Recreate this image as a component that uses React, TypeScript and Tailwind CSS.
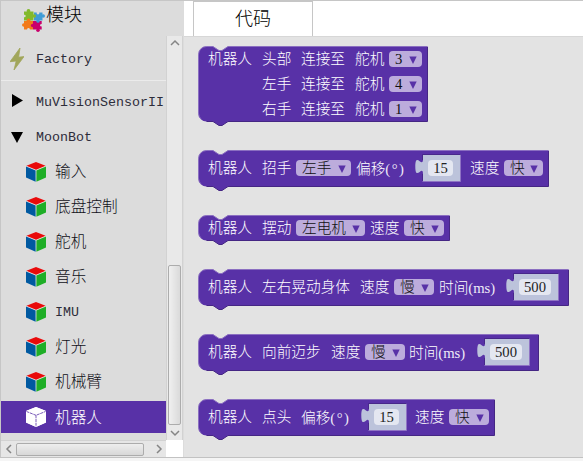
import React from 'react';

const PURPLE = '#5831a7';
const MONO = '"Liberation Mono", "Noto Sans CJK SC", monospace';

type Item =
  | { t: 'text'; s: string; w: string; unit?: string }
  | { t: 'drop'; s: string; w: string; m: string }
  | { t: 'num'; s: string; w: number; iw: string; m: string };

const text = (s: string, w: string, unit?: string): Item => ({ t: 'text', s, w, unit });
const drop = (s: string, w: string, m: string): Item => ({ t: 'drop', s, w, m });
const num = (s: string, w: number, iw: string, m: string): Item => ({ t: 'num', s, w, iw, m });

function Dropdown({ s, w, m }: { s: string; w: string; m: string }) {
  return (
    <div className={`flex h-4 shrink-0 items-center justify-between rounded-[4px] bg-[#bcacdc] pl-[6px] pr-[5px] font-['Liberation_Serif','Noto_Sans_CJK_SC',serif] text-[#111] ${w} ${m}`}>
      <span className="leading-4">{s}</span>
      <svg width="8" height="8" viewBox="0 0 8 8" className="mt-[2px]">
        <path d="M0.3 0.5H7.7L4 8Z" fill={PURPLE} />
      </svg>
    </div>
  );
}

function NumberValue({ s, w, iw, m }: { s: string; w: number; iw: string; m: string }) {
  return (
    <div className={`relative flex h-7 shrink-0 items-center pl-[13px] ${m}`} style={{ width: w }}>
      <svg className="absolute inset-0" width={w} height="28">
        <path
          d={`M${w - 0.5} .5H8V5C8 15 .3 -3 .3 12.5S8 10 8 20V27.5H${w - 0.5}Z`}
          fill="#bcc3db"
        />
        <path d={`M7.5 6V.5H${w - 0.5}`} fill="none" stroke="#47278a" />
        <path d="M7.5 20V27" fill="none" stroke="#47278a" />
        <path d={`M${w - 0.5} 1V27.5H7.5`} fill="none" stroke="#8f73c4" />
      </svg>
      <span className={`relative flex h-4 items-center justify-center rounded-[4px] bg-[#e4e7f1] font-['Liberation_Serif',serif] leading-4 text-[#222] ${iw}`}>
        {s}
      </span>
    </div>
  );
}

function Row({ items, h }: { items: Item[]; h: string }) {
  return (
    <div className={`relative flex items-center whitespace-nowrap ${h}`}>
      {items.map((it, i) => {
        if (it.t === 'text')
          return (
            <span key={i} className={`shrink-0 pt-[2px] ${it.w}`}>
              {it.s}
              {it.unit && (
                <span className={`font-['Liberation_Serif',serif] text-[#efeaf8] ${it.unit === '(°)' ? 'tracking-[1.5px]' : ''}`}>
                  {it.unit}
                </span>
              )}
            </span>
          );
        if (it.t === 'drop') return <Dropdown key={i} s={it.s} w={it.w} m={it.m} />;
        return <NumberValue key={i} s={it.s} w={it.w} iw={it.iw} m={it.m} />;
      })}
    </div>
  );
}

function Block({ w, h, mb, children }: { w: number; h: number; mb: string; children: React.ReactNode }) {
  const b = h - 0.5;
  const r = w - 0.5;
  return (
    <div
      className={`relative pl-[10px] text-[14.67px] font-light text-white ${mb}`}
      style={{ width: w, height: h }}
    >
      <svg className="absolute left-0 top-0 overflow-visible" width={w} height={h + 5}>
        <path
          d={`M.5 8.5A8 8 0 0 1 8.5 .5H15L21 4.5H24L30 .5H${r}V${b}H30L24 ${b + 4}H21L15 ${b}H8.5A8 8 0 0 1 .5 ${b - 8}Z`}
          fill={PURPLE}
        />
        <path d={`M${r} 1V${b}H30L24 ${b + 4}H21L15 ${b}H8.5`} fill="none" stroke="#452684" />
        <path d={`M3 ${b - 2.5}A8 8 0 0 1 .5 ${b - 8}V8.5A8 8 0 0 1 8.5 .5H15L21 4.5H24L30 .5H${r}`} fill="none" stroke="#8b6fc1" />
      </svg>
      {children}
    </div>
  );
}

const robot = text('机器人', 'w-[54px]');

function Cube({ white }: { white?: boolean }) {
  return (
    <svg width="20" height="20" viewBox="0 0 20 20">
      <path d="M10 0L20 3.9V15.6L10 20L0 15.6V3.9Z" fill={white ? '#fff' : '#e6e6e6'} />
      <path d="M10 0L19.6 3.8L10 7.8L.4 3.8Z" fill={white ? '#fff' : '#e90a0a'} />
      <path d="M0 4.5L9.6 8.6V19.8L0 15.6Z" fill={white ? '#fff' : '#0059a0'} />
      <path d="M20 4.5L10.4 8.6V19.8L20 15.6Z" fill={white ? '#fff' : '#1fae27'} />
      {white && <path d="M.5 4.5L10 8.3L19.5 4.5M10 8.3V19.5" fill="none" stroke={PURPLE} strokeWidth=".8" strokeDasharray="3 .7" />}
    </svg>
  );
}

function Puzzle() {
  return (
    <svg width="23" height="23" viewBox="0 0 23 23">
      <g fill="#3f9cd6">
        <rect x="12" y="3.5" width="8.5" height="8" />
        <circle cx="21.2" cy="7" r="1.8" />
        <circle cx="16" cy="12.4" r="1.7" />
      </g>
      <g fill="#82b92c">
        <rect x="2" y="2.5" width="9.5" height="9" />
        <circle cx="6.5" cy="1.9" r="1.9" />
        <circle cx="12.2" cy="7" r="1.8" />
      </g>
      <g fill="#f27a1a">
        <rect x="2" y="12" width="9" height="8.5" />
        <circle cx="1.8" cy="16" r="1.8" />
        <circle cx="6.5" cy="11.3" r="1.8" />
      </g>
      <g fill="#c9006c">
        <rect x="11" y="12" width="8.7" height="8.5" />
        <circle cx="10.6" cy="16.5" r="1.7" />
        <circle cx="16" cy="21.2" r="1.8" />
      </g>
      <circle cx="6.5" cy="20.3" r="1.3" fill="#dcdcdc" />
      <circle cx="16" cy="4" r="1.4" fill="#dcdcdc" />
      <circle cx="19.4" cy="16.3" r="1.3" fill="#dcdcdc" />
      <circle cx="2.4" cy="7" r="1.3" fill="#dcdcdc" />
      <circle cx="16" cy="12.2" r="1.6" fill="#3f9cd6" />
    </svg>
  );
}

function Chevron({ d }: { d: string }) {
  return (
    <svg width="10" height="10" viewBox="0 0 10 10">
      <path d={d} fill="none" stroke="#858585" strokeWidth="1.5" />
    </svg>
  );
}

function Sidebar() {
  return (
    <div className="flex w-[184px] shrink-0 flex-col border-l border-[#c6c6c6] bg-[#dcdcdc]">
      <div className="flex h-[35px] pl-[21px]">
        <div className="pt-2"><Puzzle /></div>
        <span className="ml-[1px] mt-[2px] text-[18px] font-light leading-[27px]">模块</span>
      </div>
      <div className="flex h-[404px]">
        <div className="flex w-[165px] flex-col overflow-hidden text-[13.33px] font-light text-[#2c2c3a]">
          <div className="flex h-[45px] shrink-0 items-center border-b border-[#ebebeb] pl-[9px]">
            <svg width="14" height="22" viewBox="0 0 14 22" className="mt-px">
              <path d="M10 0L0 13.7L6.2 13L4 22L14 8.6L8.6 9.2Z" fill="#a1a65b" stroke="#a1a65b" strokeWidth=".8" />
            </svg>
            <span className="ml-[12px] pt-[4px]">Factory</span>
          </div>
          <div className="flex h-[39px] shrink-0 items-center pl-[11px]">
            <svg width="11" height="13" className="shrink-0"><path d="M0 0L11 6.5L0 13Z" /></svg>
            <span className="ml-[13px] pt-[4px]">MuVisionSensorII</span>
          </div>
          <div className="flex h-[34px] shrink-0 items-center pl-[10px]">
            <svg width="12" height="11"><path d="M0 0H12L6 11Z" /></svg>
            <span className="ml-[13px] pt-[2px]">MoonBot</span>
          </div>
          {['输入', '底盘控制', '舵机', '音乐', 'IMU', '灯光', '机械臂'].map((s) => (
            <div key={s} className="flex h-[35px] shrink-0 items-center pl-[25px]">
              <Cube />
              <span className={s === 'IMU' ? 'ml-[9px] pt-[2px]' : 'ml-[9px] pt-[5px] text-[15.67px] text-[#101018]'}>{s}</span>
            </div>
          ))}
          <div className="mt-[2px] flex h-8 shrink-0 items-center bg-[#5831a7] pl-[25px] text-[15.67px] text-white">
            <Cube white />
            <span className="ml-[9px] pt-[5px]">机器人</span>
          </div>
        </div>
        <div className="flex w-[17px] flex-col items-center border-x border-[#d2d2d2] bg-[#e9e9e9]">
          <div className="flex h-[14px] items-center"><Chevron d="M1 7L5 3L9 7" /></div>
          <div className="mt-[215px] h-[161px] w-[13px] rounded-[2px] border border-[#acacac] bg-gradient-to-r from-[#f0f0f0] to-[#dadada]" />
          <div className="flex h-[15px] items-center"><Chevron d="M1 3L5 7L9 3" /></div>
        </div>
      </div>
      <div className="flex h-[17px]">
        <div className="flex w-[165px] items-center border-t border-[#d2d2d2] bg-[#e6e6e6]">
          <div className="flex w-[15px] justify-center"><Chevron d="M7 1L3 5L7 9" /></div>
          <div className="h-[13px] w-[128px] rounded-[2px] border border-[#acacac] bg-gradient-to-b from-[#eeeeee] to-[#d8d8d8]" />
          <div className="ml-[10px]"><Chevron d="M3 1L7 5L3 9" /></div>
        </div>
        <div className="w-[17px] bg-white" />
      </div>
    </div>
  );
}

export default function App() {
  return (
    <div
      className="flex h-[461px] w-[583px] flex-col overflow-hidden border-t border-[#c6c6c6] bg-[#e3e3e3]"
      style={{ fontFamily: MONO }}
    >
      <div className="flex h-[456px]">
        <Sidebar />
        <div className="flex flex-1 flex-col">
          <div className="flex h-[35px] bg-white pl-[9px]">
            <div className="w-[120px] border-x border-t border-[#c6c6c6] pt-px text-center text-[18px] font-light leading-[34px]">
              代码
            </div>
          </div>
          <div className="flex-1 border-t border-[#d7d7d7] bg-[#e3e3e3] pl-[14px] pt-[9px]">
            <Block w={230} h={76} mb="mb-[28px]">
              <Row h="h-[25px]" items={[robot, text('头部', 'w-[39px]'), text('连接至', 'w-[54px]'), text('舵机', 'w-[34px]'), drop('3', 'w-[33px]', '')]} />
              <Row h="h-[25px]" items={[text('', 'w-[54px]'), text('左手', 'w-[39px]'), text('连接至', 'w-[54px]'), text('舵机', 'w-[34px]'), drop('4', 'w-[33px]', '')]} />
              <Row h="h-[25px]" items={[text('', 'w-[54px]'), text('右手', 'w-[39px]'), text('连接至', 'w-[54px]'), text('舵机', 'w-[34px]'), drop('1', 'w-[33px]', '')]} />
            </Block>
            <Block w={351} h={37} mb="mb-[28px]">
              <Row h="h-[36px]" items={[robot, text('招手', 'w-[34px]'), drop('左手', 'w-[55px]', 'mr-[5px]'), text('偏移', 'w-[59px]', '(°)'), num('15', 46, 'w-[25px]', 'mr-[9px]'), text('速度', 'w-[34px]'), drop('快', 'w-[39px]', '')]} />
            </Block>
            <Block w={252} h={26} mb="mb-[28px]">
              <Row h="h-[26px]" items={[robot, text('摆动', 'w-[34px]'), drop('左电机', 'w-[69px]', 'mr-[5px]'), text('速度', 'w-[34px]'), drop('快', 'w-[40px]', '')]} />
            </Block>
            <Block w={371} h={37} mb="mb-[28px]">
              <Row h="h-[36px]" items={[robot, text('左右晃动身体', 'w-[98px]'), text('速度', 'w-[34px]'), drop('慢', 'w-[40px]', 'mr-[5px]'), text('时间', 'w-[67px]', '(ms)'), num('500', 53, 'w-[32px]', '')]} />
            </Block>
            <Block w={341} h={37} mb="mb-[28px]">
              <Row h="h-[36px]" items={[robot, text('向前迈步', 'w-[69px]'), text('速度', 'w-[34px]'), drop('慢', 'w-[40px]', 'mr-[4px]'), text('时间', 'w-[68px]', '(ms)'), num('500', 53, 'w-[32px]', '')]} />
            </Block>
            <Block w={297} h={37} mb="">
              <Row h="h-[36px]" items={[robot, text('点头', 'w-[39px]'), text('偏移', 'w-[60px]', '(°)'), num('15', 46, 'w-[25px]', 'mr-[8px]'), text('速度', 'w-[34px]'), drop('快', 'w-[40px]', '')]} />
            </Block>
          </div>
        </div>
      </div>
      <div className="h-1 border-t border-[#c2c2c2] bg-[#f5f5f5]" />
    </div>
  );
}
